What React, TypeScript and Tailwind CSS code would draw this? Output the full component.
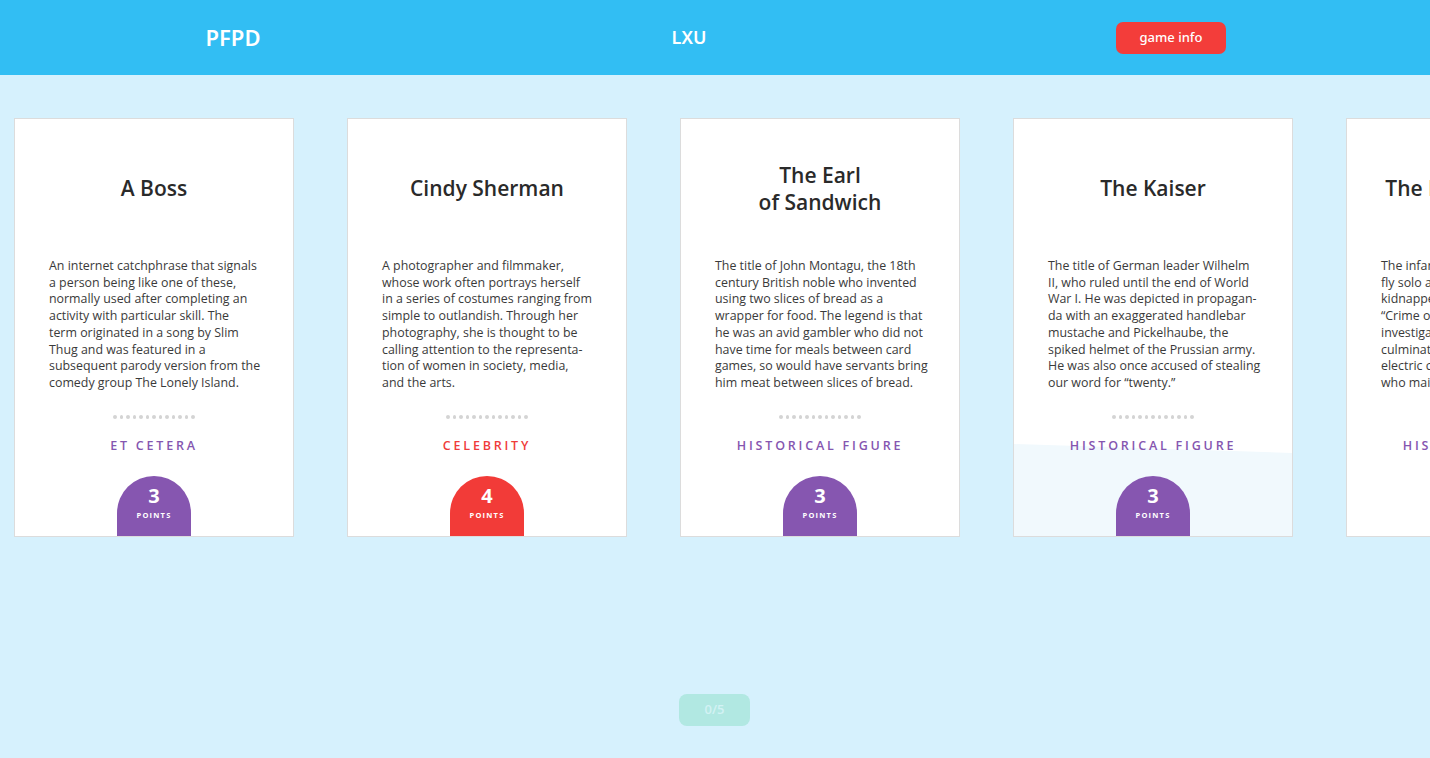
import React from "react";

type Card = {
  title: string[];
  lines: string[];
  category: string;
  points: number;
  color: "purple" | "red";
  tint?: boolean;
};

const cards: Card[] = [
  {
    title: ["A Boss"],
    lines: [
      "An internet catchphrase that signals",
      "a person being like one of these,",
      "normally used after completing an",
      "activity with particular skill. The",
      "term originated in a song by Slim",
      "Thug and was featured in a",
      "subsequent parody version from the",
      "comedy group The Lonely Island.",
    ],
    category: "Et Cetera",
    points: 3,
    color: "purple",
  },
  {
    title: ["Cindy Sherman"],
    lines: [
      "A photographer and filmmaker,",
      "whose work often portrays herself",
      "in a series of costumes ranging from",
      "simple to outlandish. Through her",
      "photography, she is thought to be",
      "calling attention to the representa-",
      "tion of women in society, media,",
      "and the arts.",
    ],
    category: "Celebrity",
    points: 4,
    color: "red",
  },
  {
    title: ["The Earl", "of Sandwich"],
    lines: [
      "The title of John Montagu, the 18th",
      "century British noble who invented",
      "using two slices of bread as a",
      "wrapper for food. The legend is that",
      "he was an avid gambler who did not",
      "have time for meals between card",
      "games, so would have servants bring",
      "him meat between slices of bread.",
    ],
    category: "Historical Figure",
    points: 3,
    color: "purple",
  },
  {
    title: ["The Kaiser"],
    lines: [
      "The title of German leader Wilhelm",
      "II, who ruled until the end of World",
      "War I. He was depicted in propagan-",
      "da with an exaggerated handlebar",
      "mustache and Pickelhaube, the",
      "spiked helmet of the Prussian army.",
      "He was also once accused of stealing",
      "our word for \u201Ctwenty.\u201D",
    ],
    category: "Historical Figure",
    points: 3,
    color: "purple",
    tint: true,
  },
  {
    title: ["The Lindbergh Baby"],
    lines: [
      "The infant son of the aviator to first",
      "fly solo across the Atlantic, he was",
      "kidnapped in 1932 in the so-called",
      "\u201CCrime of the Century.\u201D The",
      "investigation and the trial that",
      "culminated in the use of the",
      "electric chair on Bruno Hauptmann,",
      "who maintained his innocence.",
    ],
    category: "Historical Figure",
    points: 3,
    color: "purple",
  },
];

const font = { fontFamily: '"Open Sans", "Liberation Sans", sans-serif' };

const CardView: React.FC<{ card: Card }> = ({ card }) => {
  const isRed = card.color === "red";
  return (
    <div className="relative shrink-0 w-[280px] h-[419px] bg-white border border-[#dcdcdc] overflow-hidden">
      {card.tint && (
        <svg className="absolute left-0 top-0" width="280" height="419" viewBox="0 0 280 419">
          <polygon points="0,325 280,334 280,419 0,419" fill="#f1f9fd" />
        </svg>
      )}
      <div className="relative flex flex-col items-center">
        <div className="h-[139px] w-full flex flex-col items-center justify-center text-[21px] leading-[27px] font-semibold text-[#2a2a2a] text-center">
          {card.title.map((t) => (
            <span key={t} className="whitespace-nowrap">{t}</span>
          ))}
        </div>
        <div className="h-[150px] w-full px-[34px] text-[12.4px] leading-[16.7px] text-[#3a3a3a]">
          {card.lines.map((l, i) => (
            <div key={i} className="whitespace-nowrap">{l}</div>
          ))}
        </div>
        <div className="mt-[7px] h-[4px] flex gap-[3px]">
          {Array.from({ length: 13 }).map((_, i) => (
            <span key={i} className="w-[3.5px] h-[3.5px] rounded-full bg-[#d4d4d4]" />
          ))}
        </div>
        <div
          className={
            "mt-[19px] h-[16px] flex items-center text-[12.5px] font-semibold uppercase tracking-[2.8px] whitespace-nowrap " +
            (isRed ? "text-[#ef3b3a]" : "text-[#8556b0]")
          }
        >
          {card.category}
        </div>
        <div
          className={
            "mt-[22px] w-[74px] h-[62px] rounded-t-[37px] flex flex-col items-center text-white " +
            (isRed ? "bg-[#f23b38]" : "bg-[#8656b0]")
          }
        >
          <span className="mt-[8px] text-[20px] leading-[24px] font-bold">{card.points}</span>
          <span className="mt-[2px] text-[7.5px] leading-[10px] font-bold tracking-[1.2px]">POINTS</span>
        </div>
      </div>
    </div>
  );
};

export default function App() {
  return (
    <div className="w-[1430px] h-[758px] bg-[#d6f1fd] overflow-hidden flex flex-col" style={font}>
      <header className="h-[75px] shrink-0 bg-[#32bef3] flex items-center text-white">
        <div className="w-[466px] text-center text-[22px] font-semibold" style={{ fontFamily: '"Noto Sans", sans-serif' }}>
          PFPD
        </div>
        <div className="w-[446px] text-center text-[18px] font-semibold" style={{ fontFamily: '"Noto Sans", sans-serif' }}>
          LXU
        </div>
        <button
          className="ml-[204px] w-[110px] h-[32px] rounded-[7px] bg-[#f33d3a] text-white text-[13px] font-medium"
          style={{ fontFamily: '"Noto Sans", sans-serif' }}
        >
          game info
        </button>
      </header>
      <main className="flex-1 flex flex-col">
        <div className="mt-[43px] pl-[14px] flex gap-[53px]">
          {cards.map((c) => (
            <CardView key={c.title.join(" ")} card={c} />
          ))}
        </div>
        <div className="mt-[157px] flex justify-center">
          <div className="ml-[-1px] w-[71px] h-[32px] rounded-[8px] bg-[#b1e8e2] text-[#d3f2f4] text-[13px] font-semibold flex items-center justify-center">
            0/5
          </div>
        </div>
      </main>
    </div>
  );
}
